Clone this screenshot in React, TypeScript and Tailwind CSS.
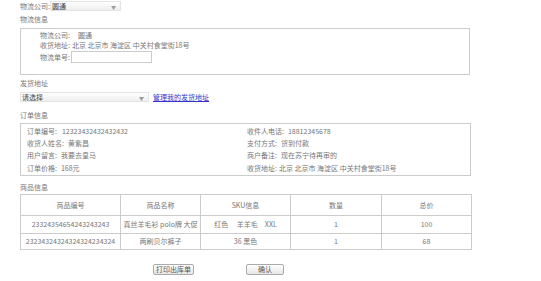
import React from 'react';

const FONT = 'font-["Noto_Sans_CJK_SC","Noto_Sans",sans-serif]';

const goods = [
  { code: '23324354654243243243', name: '真丝羊毛衫 polo牌 大促', sku: '红色　 羊羊毛　XXL', qty: '1', total: '100' },
  { code: '23234324324324324234324', name: '两刷贝尔裤子', sku: '36 黑色', qty: '1', total: '68' },
];

const Row: React.FC<{ label: string; value: string; gap?: string }> = ({ label, value, gap = 'ml-[4px]' }) => (
  <div className="flex h-[12.3px] items-center whitespace-nowrap">
    <span>{label}</span>
    <span className={gap}>{value}</span>
  </div>
);

const Select: React.FC<{ text: string; w: string }> = ({ text, w }) => (
  <div className={`${w} h-[10px] flex items-center justify-between pl-[1px] pr-[4px] bg-gradient-to-b from-white to-[#eeeeee] border border-[#e4e4e4] text-[#444]`}>
    <span>{text}</span>
    <span className="text-[5px] text-[#999]">▼</span>
  </div>
);

export default function App() {
  return (
    <div className={`${FONT} w-[541px] h-[281px] bg-white text-[7px] leading-none text-[#777] px-[20px] pt-[1px] overflow-hidden`}>
      {/* 物流公司 */}
      <div className="flex items-center h-[10px]">
        <span className="w-[30px]">物流公司:</span>
        <Select text="圆通" w="w-[71px]" />
      </div>
      <div className="mt-[3px] h-[10px] flex items-center">物流信息</div>

      <div className="mt-[4px] w-[450px] h-[47px] border border-[#cccccc] pl-[19px] pt-[1px]">
        <div className="flex h-[10px] items-center">
          <span>物流公司:</span>
          <span className="ml-[8px]">圆通</span>
        </div>
        <div className="flex h-[10px] items-center">
          <span>收货地址:</span>
          <span className="ml-[2px]">北京 北京市 海淀区 中关村食堂街18号</span>
        </div>
        <div className="flex items-center mt-[1px]">
          <span>物流单号:</span>
          <div className="ml-[1px] w-[81px] h-[12px] border border-[#cccccc] bg-white" />
        </div>
      </div>

      {/* 发货地址 */}
      <div className="mt-[3px] h-[10px] flex items-center">发货地址</div>
      <div className="mt-[4px] flex items-center h-[10px]">
        <Select text="请选择" w="w-[129px]" />
        <span className="ml-[4px] text-[#3333cc] underline">管理我的发货地址</span>
      </div>

      {/* 订单信息 */}
      <div className="mt-[8px] h-[10px] flex items-center">订单信息</div>
      <div className="mt-[3px] w-[451px] h-[53px] border border-[#cccccc] pl-[6px] pt-[1px] grid grid-cols-[220px_1fr]">
        <div>
          <Row label="订单编号:" value="12323432432432432" gap="ml-[5px]" />
          <Row label="收货人姓名:" value="黄紫昌" />
          <Row label="用户留言:" value="我要去皇马" />
          <Row label="订单价格:" value="168元" />
        </div>
        <div>
          <Row label="收件人电话:" value="18812345678" />
          <Row label="支付方式:" value="货到付款" />
          <Row label="商户备注:" value="现在苏宁待再审的" />
          <Row label="收货地址:" value="北京 北京市 海淀区 中关村食堂街18号" gap="ml-[2px]" />
        </div>
      </div>

      {/* 商品信息 */}
      <div className="mt-[6px] h-[10px] flex items-center">商品信息</div>
      <table className="mt-[2px] w-[451px] border-collapse border border-[#bbbbbb] table-fixed">
        <colgroup>
          <col className="w-[100px]" />
          <col className="w-[80px]" />
          <col className="w-[90px]" />
          <col className="w-[91px]" />
          <col className="w-[90px]" />
        </colgroup>
        <thead>
          <tr className="h-[21px]">
            {['商品编号', '商品名称', 'SKU信息', '数量', '总价'].map(h => (
              <th key={h} className="border border-[#cccccc] font-normal text-center">{h}</th>
            ))}
          </tr>
        </thead>
        <tbody>
          {goods.map((g, i) => (
            <tr key={g.code} className={i === 0 ? 'h-[18px]' : 'h-[16px]'}>
              <td className="border border-[#cccccc] text-center whitespace-nowrap">{g.code}</td>
              <td className="border border-[#cccccc] text-center whitespace-nowrap">{g.name}</td>
              <td className="border border-[#cccccc] text-center whitespace-pre">{g.sku}</td>
              <td className="border border-[#cccccc] text-center">{g.qty}</td>
              <td className="border border-[#cccccc] text-center">{g.total}</td>
            </tr>
          ))}
        </tbody>
      </table>

      {/* 按钮 */}
      <div className="mt-[14px] flex">
        <button className="ml-[133px] w-[41px] h-[11px] border border-[#aaaaaa] rounded-[2px] bg-gradient-to-b from-white to-[#e6e6e6] text-[#555] flex items-center justify-center">打印出库单</button>
        <button className="ml-[52px] w-[38px] h-[11px] border border-[#aaaaaa] rounded-[2px] bg-gradient-to-b from-white to-[#e6e6e6] text-[#555] flex items-center justify-center">确认</button>
      </div>
    </div>
  );
}
